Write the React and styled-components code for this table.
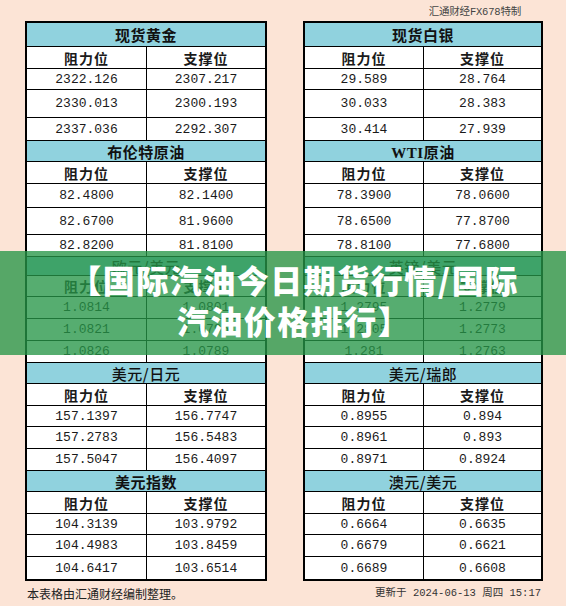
import React from 'react';
import styled, { createGlobalStyle } from 'styled-components';

const Global = createGlobalStyle`
  html, body { margin: 0; padding: 0; background: #fce4d6; }
  * { box-sizing: border-box; }
`;

const CJK = `"Noto Sans CJK SC", "Noto Sans", sans-serif`;
const MONO = `"Liberation Mono", "Noto Sans CJK SC", monospace`;

const Page = styled.div`
  position: relative;
  width: 566px;
  height: 606px;
  overflow: hidden;
  background: #fce4d6;
  font-family: ${CJK};
  color: #111;
`;

const TopBar = styled.div`
  height: 21px;
  display: flex;
  justify-content: flex-end;
  align-items: center;
  padding: 0 45px 0 0;
  font-family: ${MONO};
  font-size: 10.5px;
  color: #444;
  letter-spacing: -0.2px;
`;

const Tables = styled.div`
  display: grid;
  grid-template-columns: 242px 240px;
  column-gap: 36px;
  align-items: start;
  padding-left: 25px;
`;

const Table = styled.div`
  border: 2px solid #000;
  background: #fff;
  display: flex;
  flex-direction: column;
`;

const TitleRow = styled.div`
  height: ${p => p.$h}px;
  background: #90d2de;
  display: flex;
  align-items: center;
  justify-content: center;
  font-size: 15px;
  font-weight: ${p => (p.$bold ? 700 : 500)};
  letter-spacing: 0.5px;
  color: #111;
  border-top: ${p => (p.$first ? 'none' : '1px solid #000')};
  border-bottom: 1px solid #000;
  font-family: ${p => (p.$bold ? `"Liberation Serif", ${CJK}` : CJK)};
`;

const Row = styled.div`
  height: ${p => p.$h}px;
  display: grid;
  grid-template-columns: 1fr 1fr;
  border-bottom: ${p => (p.$last ? 'none' : '1px solid #000')};
`;

const Cell = styled.div`
  display: flex;
  align-items: center;
  justify-content: center;
  border-left: ${p => (p.$second ? '1px solid #000' : 'none')};
  font-family: ${p => (p.$head ? CJK : MONO)};
  font-size: ${p => (p.$head ? '14px' : '13px')};
  font-weight: ${p => (p.$head ? 700 : 400)};
  letter-spacing: ${p => (p.$head ? '1px' : '0')};
  color: #1a1a1a;
`;

const Footer = styled.div`
  display: flex;
  justify-content: space-between;
  align-items: center;
  padding: 5px 25px 0 27px;
  line-height: 16px;
`;

const Note = styled.div`
  font-size: 12px;
  color: #222;
`;

const Updated = styled.div`
  font-family: ${MONO};
  font-size: 10.5px;
  color: #333;
  margin-top: -3px;
`;

const Band = styled.div`
  position: absolute;
  left: 0;
  right: 0;
  top: 251px;
  height: 104px;
  padding: 0 0 7px 22px;
  background: rgba(38, 150, 72, 0.78);
  display: flex;
  align-items: center;
  justify-content: center;
  text-align: center;
`;

const BandText = styled.div`
  color: #fff;
  font-family: ${CJK};
  font-weight: 900;
  font-size: 32px;
  line-height: 41px;
  letter-spacing: 1.5px;
  white-space: nowrap;
`;

const left = [
  { title: '现货黄金', bold: true, h: [24, 22, 21, 28, 22], rows: [['2322.126', '2307.217'], ['2330.013', '2300.193'], ['2337.036', '2292.307']] },
  { title: '布伦特原油', bold: true, h: [22, 22, 24, 27, 21], rows: [['82.4800', '82.1400'], ['82.6700', '81.9600'], ['82.8200', '81.8100']] },
  { title: '欧元/美元', bold: false, h: [20, 21, 22, 22, 21], rows: [['1.0814', '1.0801'], ['1.0821', '1.0795'], ['1.0826', '1.0789']] },
  { title: '美元/日元', bold: false, h: [22, 22, 21, 22, 21], rows: [['157.1397', '156.7747'], ['157.2783', '156.5483'], ['157.5047', '156.4097']] },
  { title: '美元指数', bold: true, h: [22, 22, 21, 22, 22], rows: [['104.3139', '103.9792'], ['104.4983', '103.8459'], ['104.6417', '103.6514']] },
];

const right = [
  { title: '现货白银', bold: true, h: [24, 22, 21, 28, 22], rows: [['29.589', '28.764'], ['30.033', '28.383'], ['30.414', '27.939']] },
  { title: 'WTI原油', bold: true, h: [22, 22, 24, 27, 21], rows: [['78.3900', '78.0600'], ['78.6500', '77.8700'], ['78.8100', '77.6800']] },
  { title: '英镑/美元', bold: false, h: [20, 21, 22, 22, 21], rows: [['1.2795', '1.2779'], ['1.2805', '1.2773'], ['1.281', '1.2763']] },
  { title: '美元/瑞郎', bold: false, h: [22, 22, 21, 22, 21], rows: [['0.8955', '0.894'], ['0.8961', '0.893'], ['0.8971', '0.8924']] },
  { title: '澳元/美元', bold: false, h: [22, 22, 21, 22, 22], rows: [['0.6664', '0.6635'], ['0.6679', '0.6621'], ['0.6689', '0.6608']] },
];

function Column({ sections }) {
  return (
    <Table>
      {sections.map((s, si) => (
        <React.Fragment key={s.title}>
          <TitleRow $h={s.h[0]} $bold={s.bold} $first={si === 0}>{s.title}</TitleRow>
          <Row $h={s.h[1]}>
            <Cell $head>阻力位</Cell>
            <Cell $head $second>支撑位</Cell>
          </Row>
          {s.rows.map((r, ri) => (
            <Row key={ri} $h={s.h[2 + ri]} $last={ri === 2}>
              <Cell>{r[0]}</Cell>
              <Cell $second>{r[1]}</Cell>
            </Row>
          ))}
        </React.Fragment>
      ))}
    </Table>
  );
}

export default function App() {
  return (
    <Page>
      <Global />
      <TopBar>汇通财经FX678特制</TopBar>
      <Tables>
        <Column sections={left} />
        <Column sections={right} />
      </Tables>
      <Footer>
        <Note>本表格由汇通财经编制整理。</Note>
        <Updated>更新于 2024-06-13 周四 15:17</Updated>
      </Footer>
      <Band>
        <BandText>
          【国际汽油今日期货行情/国际
          <br />
          汽油价格排行】
        </BandText>
      </Band>
    </Page>
  );
}
